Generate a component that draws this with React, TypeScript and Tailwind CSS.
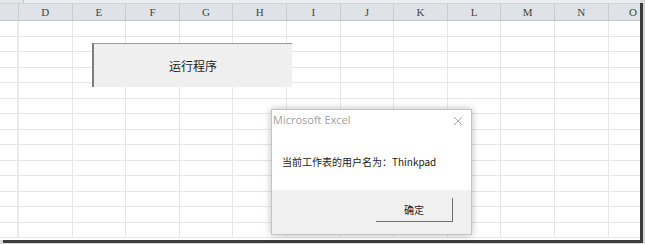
import React from "react";

const cols = ["D", "E", "F", "G", "H", "I", "J", "K", "L", "M", "N"];
const rows = Array.from({ length: 14 }, (_, i) => i);

export default function App() {
  return (
    <div className="w-[645px] h-[244px] bg-[#d9d9d9] relative overflow-hidden">
      <div className="w-[640px] h-[240px] bg-white shadow-[3px_3px_0_#3c3c3c] flex flex-col relative">
        {/* top strip */}
        <div className="h-[4px] flex bg-[#eceef0] border-b border-[#cfd2d6]">
          <div className="w-[24px] border-r border-[#c6c9cd] bg-[#e4e6e9]" />
        </div>
        {/* column header */}
        <div
          className="h-[17px] flex bg-[#dfe2e7] border-b border-[#c3c6cb] text-[11px] text-[#444] leading-[16px]"
          style={{ fontFamily: '"Liberation Serif", serif' }}
        >
          <div className="w-[19px] border-r border-[#c9ccd1]" />
          {cols.map((c) => (
            <div key={c} className="w-[53.6px] border-r border-[#c9ccd1] text-center">
              {c}
            </div>
          ))}
          <div className="flex-1 text-right pr-[3px]">O</div>
        </div>
        {/* grid */}
        <div className="flex-1 flex flex-col">
          {rows.map((r) => (
            <div key={r} className="h-[15.5px] flex border-b border-[#e6e6e6]">
              <div className="w-[19px] border-r-2 border-[#e8e8e8]" />
              {cols.map((c) => (
                <div key={c} className="w-[53.6px] border-r border-[#e6e6e6]" />
              ))}
              <div className="flex-1" />
            </div>
          ))}
        </div>

        {/* sheet button */}
        <div
          className="absolute left-[92px] top-[43px] w-[200px] h-[44px] bg-[#efefef] border-l-2 border-t border-l-[#7d7d7d] border-t-[#9a9a9a] flex items-center justify-center text-[12px] text-[#1e1e1e]"
          style={{ fontFamily: '"Noto Sans CJK SC", sans-serif' }}
        >
          运行程序
        </div>

        {/* dialog */}
        <div
          className="absolute left-[271px] top-[109px] w-[201px] h-[126px] bg-white border border-[#c4c4c4] shadow-[0_0_7px_rgba(0,0,0,0.28)] flex flex-col"
          style={{ fontFamily: '"Noto Sans CJK SC", sans-serif' }}
        >
          <div className="h-[21px] flex items-center justify-between pl-[1px] pr-[8px]">
            <span
              className="text-[11px] text-[#a0a0a0]"
              style={{ fontFamily: '"Open Sans", "Noto Sans CJK SC", sans-serif' }}
            >
              Microsoft Excel
            </span>
            <svg width="10" height="10" viewBox="0 0 10 10" className="mt-[1px]">
              <path d="M1 1 L9 9 M9 1 L1 9" stroke="#ababab" strokeWidth="1" fill="none" />
            </svg>
          </div>
          <div className="h-[59px] flex items-center pl-[10px] pt-[1px] text-[10px] text-[#1a1a1a]">
            当前工作表的用户名为：Thinkpad
          </div>
          <div className="flex-1 bg-[#f0f0f0] flex items-start justify-end pt-[8px] pr-[18px]">
            <div className="w-[77px] h-[24px] border-r border-b border-[#6e6e6e] flex items-center justify-center text-[10px] text-[#1a1a1a]">
              确定
            </div>
          </div>
        </div>
      </div>
    </div>
  );
}
